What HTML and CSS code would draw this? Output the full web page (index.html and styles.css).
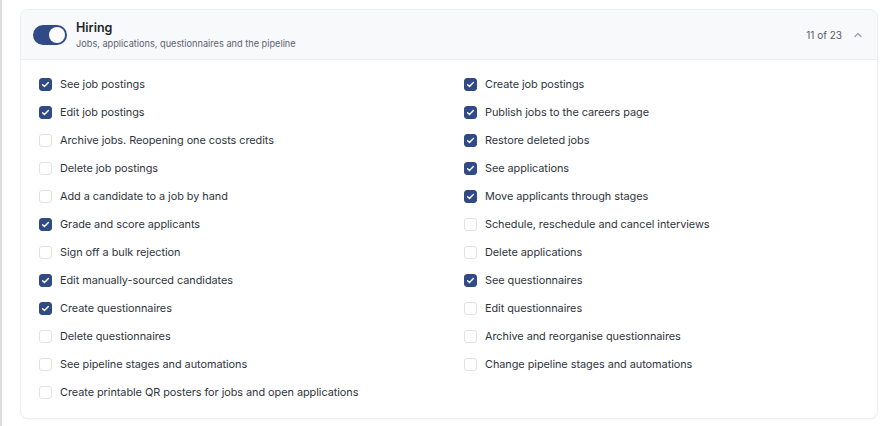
FILE: index.html
```html
<!DOCTYPE html>
<html lang="en">
<head>
    <meta charset="utf-8" />
    <title>Roles · Hiring permissions</title>
    <link rel="stylesheet" href="styles.css">
</head>
<body>
    <div class="page">
        <section class="group">
            <header class="group-head">
                <span class="switch on"><span class="knob"></span></span>
                <div class="group-title">
                    <h3>Hiring</h3>
                    <p>Jobs, applications, questionnaires and the pipeline</p>
                </div>
                <span class="count">11 of 23</span>
                <svg class="chevron" width="10" height="10" viewBox="0 0 10 10"><path d="M2 6.5 5 3.5 8 6.5" fill="none" stroke="#9aa1ad" stroke-width="1.3" stroke-linecap="round" stroke-linejoin="round"/></svg>
            </header>
            <ul class="perms">
                <li class="checked"><span class="box"></span>See job postings</li>
                <li class="checked"><span class="box"></span>Create job postings</li>
                <li class="checked"><span class="box"></span>Edit job postings</li>
                <li class="checked"><span class="box"></span>Publish jobs to the careers page</li>
                <li><span class="box"></span>Archive jobs. Reopening one costs credits</li>
                <li class="checked"><span class="box"></span>Restore deleted jobs</li>
                <li><span class="box"></span>Delete job postings</li>
                <li class="checked"><span class="box"></span>See applications</li>
                <li><span class="box"></span>Add a candidate to a job by hand</li>
                <li class="checked"><span class="box"></span>Move applicants through stages</li>
                <li class="checked"><span class="box"></span>Grade and score applicants</li>
                <li><span class="box"></span>Schedule, reschedule and cancel interviews</li>
                <li><span class="box"></span>Sign off a bulk rejection</li>
                <li><span class="box"></span>Delete applications</li>
                <li class="checked"><span class="box"></span>Edit manually-sourced candidates</li>
                <li class="checked"><span class="box"></span>See questionnaires</li>
                <li class="checked"><span class="box"></span>Create questionnaires</li>
                <li><span class="box"></span>Edit questionnaires</li>
                <li><span class="box"></span>Delete questionnaires</li>
                <li><span class="box"></span>Archive and reorganise questionnaires</li>
                <li><span class="box"></span>See pipeline stages and automations</li>
                <li><span class="box"></span>Change pipeline stages and automations</li>
                <li><span class="box"></span>Create printable QR posters for jobs and open applications</li>
            </ul>
        </section>
    </div>
</body>
</html>
```

FILE: styles.css
```css
* {
    box-sizing: border-box;
}
body {
    margin: 0;
    background: #ffffff;
    font-family: Inter, "Liberation Sans", sans-serif;
    color: #2b2f36;
}
.page {
    min-height: 426px;
    border-left: 2px solid #dcdde0;
    padding: 9px 18px 0 18px;
}
.group {
    width: 858px;
    border: 1px solid #eceef1;
    border-radius: 8px;
    background: #ffffff;
    box-shadow: 0 1px 2px rgba(20, 30, 50, 0.04);
    overflow: hidden;
}
.group-head {
    display: flex;
    align-items: center;
    height: 50px;
    padding: 0 14px 0 12px;
    background: #f8f9fb;
    border-bottom: 1px solid #eceef1;
}
.switch {
    position: relative;
    width: 34px;
    height: 20px;
    border-radius: 10px;
    background: #cfd4dc;
    flex-shrink: 0;
}
.switch.on {
    background: #2f4a86;
}
.knob {
    position: absolute;
    top: 2px;
    left: 2px;
    width: 16px;
    height: 16px;
    border-radius: 50%;
    background: #ffffff;
}
.switch.on .knob {
    left: 16px;
}
.group-title {
    margin-left: 9px;
    flex: 1;
}
.group-title h3 {
    margin: 0;
    font-size: 12.5px;
    font-weight: 600;
    color: #22262d;
    line-height: 16px;
}
.group-title p {
    margin: 1px 0 0;
    font-size: 9.2px;
    color: #5b6270;
    line-height: 13px;
}
.count {
    font-size: 10px;
    color: #555c68;
    margin-right: 11px;
}
.chevron {
    display: block;
}
.perms {
    list-style: none;
    margin: 0;
    padding: 10px 19px 12px 18px;
    display: grid;
    grid-template-columns: 425px 1fr;
}
.perms li {
    display: flex;
    align-items: center;
    height: 28px;
    font-size: 10.9px;
    letter-spacing: -0.05px;
    color: #30353d;
}
.box {
    width: 13px;
    height: 13px;
    margin-right: 8px;
    border: 1px solid #dfe2e7;
    border-radius: 3px;
    background: #ffffff;
    flex-shrink: 0;
}
.checked .box {
    border-color: #2f4a86;
    background: #2f4a86 url("data:image/svg+xml,%3Csvg xmlns='http://www.w3.org/2000/svg' width='13' height='13' viewBox='0 0 13 13'%3E%3Cpath d='M3.6 6.7 5.5 8.5 9.4 4.6' fill='none' stroke='white' stroke-width='1.4' stroke-linecap='round' stroke-linejoin='round'/%3E%3C/svg%3E") center / 13px 13px no-repeat;
}
```
